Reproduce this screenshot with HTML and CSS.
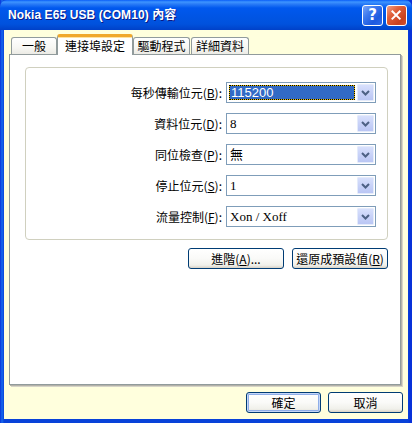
FILE: index.html
```html
<!DOCTYPE html>
<html lang="zh-Hant">
<head>
<meta charset="utf-8">
<title>Nokia E65 USB (COM10) 內容</title>
<link rel="stylesheet" href="styles.css">
</head>
<body>
<div class="window">
  <div class="titlebar">
    <span class="title">Nokia E65 USB (COM10) 內容</span>
    <div class="caption-buttons">
      <span class="cap-btn cap-help">?</span>
      <span class="cap-btn cap-close">
        <svg width="21" height="21" viewBox="0 0 21 21"><path d="M6 6 L14 14 M14 6 L6 14" stroke="#fff" stroke-width="2.2" stroke-linecap="square" fill="none"/></svg>
      </span>
    </div>
  </div>
  <div class="client">
    <div class="tabs">
      <div class="tab tab-general">一般</div>
      <div class="tab tab-active">連接埠設定</div>
      <div class="tab tab-driver">驅動程式</div>
      <div class="tab tab-details">詳細資料</div>
    </div>
    <div class="panel">
      <div class="group">
        <div class="form-grid">
          <span class="label">每秒傳輸位元(<u>B</u>):</span>
          <div class="combo combo-focused">
            <span class="value"><span class="selection">115200</span></span>
            <span class="drop"><svg width="15" height="17" viewBox="0 0 15 17"><polyline points="4,7 7.5,10.5 11,7" stroke="#4D6185" stroke-width="2" fill="none"/></svg></span>
          </div>
          <span class="label">資料位元(<u>D</u>):</span>
          <div class="combo">
            <span class="value">8</span>
            <span class="drop"><svg width="15" height="17" viewBox="0 0 15 17"><polyline points="4,7 7.5,10.5 11,7" stroke="#4D6185" stroke-width="2" fill="none"/></svg></span>
          </div>
          <span class="label">同位檢查(<u>P</u>):</span>
          <div class="combo">
            <span class="value">無</span>
            <span class="drop"><svg width="15" height="17" viewBox="0 0 15 17"><polyline points="4,7 7.5,10.5 11,7" stroke="#4D6185" stroke-width="2" fill="none"/></svg></span>
          </div>
          <span class="label">停止位元(<u>S</u>):</span>
          <div class="combo">
            <span class="value">1</span>
            <span class="drop"><svg width="15" height="17" viewBox="0 0 15 17"><polyline points="4,7 7.5,10.5 11,7" stroke="#4D6185" stroke-width="2" fill="none"/></svg></span>
          </div>
          <span class="label">流量控制(<u>F</u>):</span>
          <div class="combo">
            <span class="value">Xon / Xoff</span>
            <span class="drop"><svg width="15" height="17" viewBox="0 0 15 17"><polyline points="4,7 7.5,10.5 11,7" stroke="#4D6185" stroke-width="2" fill="none"/></svg></span>
          </div>
        </div>
      </div>
      <div class="panel-buttons">
        <span class="btn btn-wide">進階(<u>A</u>)...</span>
        <span class="btn btn-wide">還原成預設值(<u>R</u>)</span>
      </div>
    </div>
    <div class="dialog-buttons">
      <span class="btn btn-default">確定</span>
      <span class="btn">取消</span>
    </div>
  </div>
</div>
</body>
</html>
```

FILE: styles.css
```css
* { box-sizing: border-box; }

html, body {
  margin: 0;
  padding: 0;
  background: #0831D9;
}

body {
  font-family: "Noto Sans CJK TC", "Liberation Sans", sans-serif;
  font-size: 12px;
  color: #000;
}

.window {
  width: 412px;
  height: 423px;
  display: flex;
  flex-direction: column;
  background: linear-gradient(90deg, #0831D9 0, #166AEE 2px, #0842D9 4px, #0842D9 408px, #0831D9 410px);
  overflow: hidden;
}

.titlebar {
  height: 30px;
  flex: none;
  display: flex;
  align-items: center;
  justify-content: space-between;
  padding: 0 5px 0 8px;
  background: linear-gradient(180deg, #0A5EF8 0px, #3D95FF 2px, #2A7CF7 4px, #0058EE 8px, #0055E5 16px, #0052DD 24px, #0047CF 28px, #0040C8 30px);
  border-radius: 7px 7px 0 0;
}

.title {
  color: #fff;
  font-family: "Liberation Sans", "Noto Sans CJK TC", sans-serif;
  font-weight: bold;
  font-size: 12px;
  letter-spacing: 0.1px;
  text-shadow: 1px 1px 0 #0A1883;
  line-height: 16px;
}

.caption-buttons {
  display: flex;
  gap: 3px;
}

.cap-btn {
  width: 21px;
  height: 21px;
  border: 1px solid #fff;
  border-radius: 3px;
  display: flex;
  align-items: center;
  justify-content: center;
}

.cap-help {
  color: #fff;
  font-family: "DejaVu Sans", sans-serif;
  font-weight: bold;
  font-size: 15px;
  line-height: 1;
  background: linear-gradient(135deg, #7BA6F8 0%, #3D79EE 35%, #1D5AE0 70%, #2F6BE8 100%);
}

.cap-close {
  background: linear-gradient(135deg, #F0A088 0%, #E0603A 35%, #C8411E 75%, #D2522E 100%);
}

.client {
  flex: 1;
  margin: 0 4px 4px 4px;
  background: #FFFFDD;
  padding: 4px 5px 0 5px;
  display: flex;
  flex-direction: column;
}

.tabs {
  height: 20px;
  display: flex;
  align-items: flex-end;
  padding-left: 2px;
}

.tab {
  height: 17px;
  border: 1px solid #919B9C;
  border-bottom: none;
  border-radius: 3px 3px 0 0;
  background: linear-gradient(180deg, #FFFFFF 0%, #F7F7F3 60%, #ECEBE5 100%);
  text-align: center;
  line-height: 16px;
  white-space: nowrap;
}

.tab-general { width: 46px; }
.tab-driver { width: 57px; margin-right: 1px; }
.tab-details { width: 58px; }

.tab-active {
  width: 76px;
  height: 21px;
  margin-bottom: -1px;
  background: #fff;
  border-top: 3px solid #FFC83C;
  box-shadow: inset 0 1px 0 #FFE2A0;
  position: relative;
  z-index: 1;
  line-height: 17px;
  border-top-color: #F0A82C;
}

.panel {
  width: 392px;
  height: 331px;
  flex: none;
  background: #fff;
  border: 1px solid #919B9C;
  box-shadow: 1px 1px 0 #B4B2A8, 2px 2px 0 #D6D4C8;
  padding: 12px 0 0 15px;
}

.group {
  width: 363px;
  height: 173px;
  border: 1px solid #D0D0BF;
  border-radius: 4px;
  padding: 14px 11px 0 0;
}

.form-grid {
  display: grid;
  grid-template-columns: 1fr 150px;
  grid-auto-rows: 21px;
  column-gap: 4px;
  row-gap: 10px;
}

.label {
  text-align: right;
  align-self: center;
  line-height: 14px;
  white-space: nowrap;
}

.combo {
  border: 1px solid #7F9DB9;
  background: #fff;
  display: flex;
  align-items: stretch;
  padding: 1px;
}

.value {
  flex: 1;
  font-family: "Liberation Serif", "Noto Sans CJK TC", serif;
  font-size: 13px;
  line-height: 17px;
  padding-left: 2px;
  white-space: nowrap;
  display: flex;
  align-items: center;
}

.combo-focused .value {
  padding: 1px 2px 1px 1px;
}

.selection {
  flex: 1;
  height: 15px;
  line-height: 13px;
  color: #fff;
  padding-left: 1px;
  border: 1px dotted #000;
  background: linear-gradient(#316AC5, #316AC5) padding-box, #E8C000 border-box;
  font-family: "Liberation Sans", sans-serif;
  font-size: 13px;
}

.drop {
  width: 17px;
  flex: none;
  border: 1px solid #E4EBFB;
  border-radius: 1px;
  background: linear-gradient(180deg, #D8E0FC 0%, #C8D2F8 50%, #BAC6F4 100%);
  display: flex;
  align-items: center;
  justify-content: center;
}

.panel-buttons {
  width: 363px;
  margin-top: 8px;
  display: flex;
  justify-content: flex-end;
  gap: 8px;
}

.btn {
  width: 75px;
  height: 21px;
  border: 1px solid #003C74;
  border-radius: 3px;
  background: linear-gradient(180deg, #FFFFFF 0%, #FAFAF8 50%, #F0F0EA 85%, #D8D2C6 100%);
  display: flex;
  align-items: center;
  justify-content: center;
  line-height: 14px;
  white-space: nowrap;
}

.btn-wide { width: 96px; }

.btn-default {
  box-shadow: inset 0 0 0 1px #C5D7F8, inset 0 0 0 2px #8FAEE8;
}

.dialog-buttons {
  margin-top: 7px;
  display: flex;
  justify-content: flex-end;
  gap: 7px;
}
```
